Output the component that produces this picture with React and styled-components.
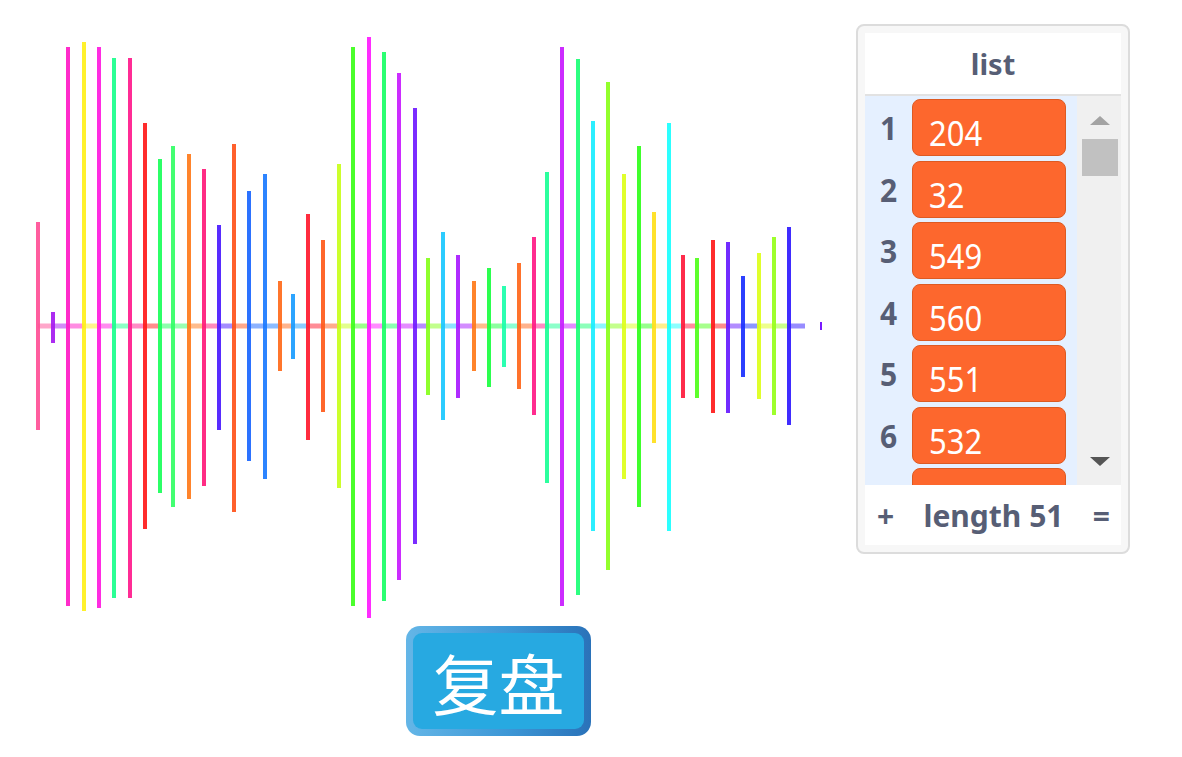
import React from 'react'
import styled, { createGlobalStyle } from 'styled-components'

const GlobalStyle = createGlobalStyle`
  body {
    margin: 0;
    background: #ffffff;
    font-family: "Noto Sans", "Open Sans", Arial, sans-serif;
  }
`

// bars of the wave: x, top, bottom, colour
const bars = [
  [38, 222, 430, '#ff4f96'],
  [53, 312, 343, '#a51af0'],
  [68, 47, 606, '#ff1ac6'],
  [84, 42, 611, '#fff01a'],
  [99, 47, 608, '#ff1ae0'],
  [114, 58, 598, '#1aff8c'],
  [130, 58, 598, '#ff1a8c'],
  [145, 123, 529, '#ff1a1a'],
  [160, 159, 493, '#1aff5a'],
  [173, 146, 507, '#33ff66'],
  [189, 154, 499, '#ff7a1a'],
  [204, 169, 486, '#ff1a7a'],
  [219, 225, 430, '#4a1aff'],
  [234, 144, 512, '#ff531a'],
  [249, 191, 461, '#1a66ff'],
  [265, 174, 479, '#1a7aff'],
  [280, 281, 371, '#ff6a1a'],
  [293, 294, 359, '#1a9cff'],
  [308, 214, 440, '#ff1a2e'],
  [323, 240, 412, '#ff5a1a'],
  [339, 164, 488, '#c8ff1a'],
  [353, 47, 606, '#3cff1a'],
  [369, 37, 618, '#ff1aff'],
  [384, 52, 601, '#1aff66'],
  [399, 73, 580, '#c81aff'],
  [415, 108, 544, '#701aff'],
  [428, 258, 395, '#86ff1a'],
  [443, 232, 420, '#1ac8ff'],
  [458, 255, 398, '#a81aff'],
  [474, 281, 371, '#ff7a1a'],
  [489, 268, 387, '#1aff40'],
  [504, 286, 367, '#1affaa'],
  [519, 263, 389, '#ff661a'],
  [534, 237, 415, '#ff1a86'],
  [547, 172, 483, '#1aff96'],
  [562, 47, 606, '#c81aff'],
  [578, 59, 595, '#1aff76'],
  [593, 121, 531, '#1aeeff'],
  [608, 82, 570, '#8aff1a'],
  [624, 174, 479, '#ddff1a'],
  [639, 146, 507, '#30ff1a'],
  [654, 212, 443, '#ffe01a'],
  [669, 123, 531, '#1affff'],
  [683, 255, 398, '#ff1a3c'],
  [697, 258, 398, '#50ff1a'],
  [713, 240, 413, '#ff1a1a'],
  [728, 242, 413, '#661aff'],
  [743, 276, 377, '#1a30ff'],
  [759, 253, 399, '#ddff1a'],
  [774, 237, 415, '#96ff1a'],
  [789, 227, 425, '#301aff'],
]

const values = [204, 32, 549, 560, 551, 532, 540]

const MID = 326
const LINE_END = 805

const Page = styled.div`
  display: flex;
  align-items: flex-start;
`

const StageColumn = styled.div`
  display: flex;
  flex-direction: column;
  width: 840px;
`

const Wave = styled.svg`
  display: block;
`

const ButtonRow = styled.div`
  display: flex;
  padding-left: 406px;
  margin-top: 4px;
`

const ReplayButton = styled.button`
  width: 185px;
  height: 110px;
  box-sizing: border-box;
  padding: 7px;
  border: none;
  border-radius: 14px;
  background: linear-gradient(to right, #64b6e7, #3d97d6 55%, #2a72b9);
  cursor: pointer;
`

const ReplayFace = styled.span`
  display: flex;
  align-items: center;
  justify-content: center;
  width: 100%;
  height: 100%;
  border-radius: 9px;
  background: #27a9e1;
  color: #ffffff;
  font-family: "Noto Sans CJK SC", "Noto Sans", sans-serif;
  font-size: 66px;
  line-height: 1;
`

const Monitor = styled.div`
  margin-top: 24px;
  margin-left: 16px;
  width: 274px;
  height: 530px;
  box-sizing: border-box;
  padding: 7px;
  border: 2px solid #dcdcdc;
  border-radius: 8px;
  background: #f7f7f7;
`

const MonitorInner = styled.div`
  display: flex;
  flex-direction: column;
  height: 100%;
  background: #ffffff;
  color: #575e75;
`

const Header = styled.div`
  display: flex;
  align-items: center;
  justify-content: center;
  height: 62px;
  border-bottom: 2px solid #e2e2e2;
  font-size: 29px;
  font-weight: 700;
`

const Body = styled.div`
  display: flex;
  height: 389px;
`

const Items = styled.div`
  width: 212px;
  padding-top: 3px;
  background: #e5f0ff;
  overflow: hidden;
`

const Row = styled.div`
  display: flex;
  align-items: center;
  height: 57px;
  margin-bottom: 4.5px;
`

const Index = styled.span`
  width: 47px;
  text-align: center;
  font-size: 30px;
  font-weight: 700;
  transform: scaleY(1.1);
`

const Cell = styled.div`
  width: 154px;
  height: 57px;
  box-sizing: border-box;
  padding: 12px 0 0 16px;
  border: 1px solid #dd5a22;
  border-radius: 8px;
  background: #fd672d;
  color: #ffffff;
  font-size: 31px;
  line-height: 42px;
`

const CellText = styled.span`
  display: inline-block;
  transform: scaleY(1.12);
`

const Scroll = styled.div`
  flex: 1;
  display: flex;
  flex-direction: column;
  align-items: center;
  background: #f0f0f0;
`

const Arrow = styled.div`
  width: 0;
  height: 0;
  margin-left: 2px;
  border-left: 10px solid transparent;
  border-right: 10px solid transparent;
  ${(p) =>
    p.down
      ? 'border-top: 9px solid #555555; margin-top: auto; margin-bottom: 19px;'
      : 'border-bottom: 9px solid #a3a3a3; margin-top: 20px;'}
`

const Thumb = styled.div`
  width: 36px;
  height: 37px;
  margin-top: 14px;
  margin-left: 2px;
  background: #c1c1c1;
`

const Footer = styled.div`
  display: flex;
  align-items: center;
  justify-content: space-between;
  height: 60px;
  padding: 0 11px 0 12px;
  font-size: 30px;
  font-weight: 700;
`

function WaveForm() {
  return (
    <Wave width="840" height="622" viewBox="0 0 840 622">
      {bars.map(([x, , , color], i) => {
        const next = i < bars.length - 1 ? bars[i + 1][0] : LINE_END
        return (
          <line
            key={`l${i}`}
            x1={x}
            y1={MID}
            x2={next}
            y2={MID}
            stroke={color}
            strokeWidth="5"
            strokeOpacity="0.5"
          />
        )
      })}
      {bars.map(([x, top, bottom, color], i) => (
        <rect
          key={`b${i}`}
          x={x - 2}
          y={top}
          width="4"
          height={bottom - top}
          fill={color}
          fillOpacity="0.92"
        />
      ))}
      <rect x="820" y="322" width="2" height="8" fill="#7a1aff" />
    </Wave>
  )
}

export default function App() {
  return (
    <Page>
      <GlobalStyle />
      <StageColumn>
        <WaveForm />
        <ButtonRow>
          <ReplayButton>
            <ReplayFace>复盘</ReplayFace>
          </ReplayButton>
        </ButtonRow>
      </StageColumn>
      <Monitor>
        <MonitorInner>
          <Header>list</Header>
          <Body>
            <Items>
              {values.map((v, i) => (
                <Row key={i}>
                  <Index>{i + 1}</Index>
                  <Cell>
                    <CellText>{v}</CellText>
                  </Cell>
                </Row>
              ))}
            </Items>
            <Scroll>
              <Arrow />
              <Thumb />
              <Arrow down />
            </Scroll>
          </Body>
          <Footer>
            <span>+</span>
            <span>length 51</span>
            <span>=</span>
          </Footer>
        </MonitorInner>
      </Monitor>
    </Page>
  )
}
